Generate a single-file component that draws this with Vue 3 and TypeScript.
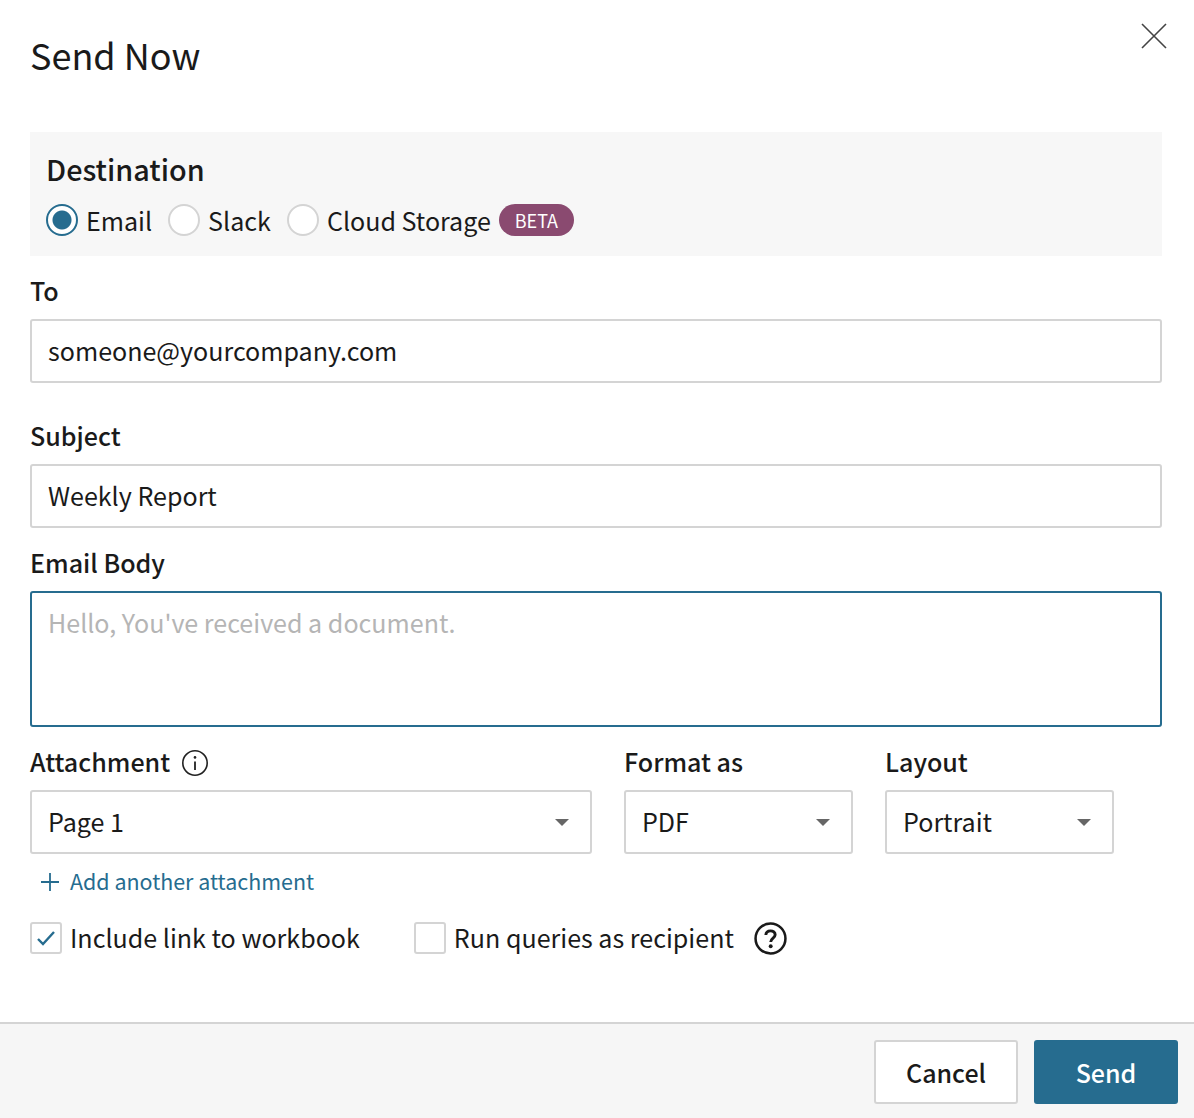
<template>
  <div class="dialog">
    <div class="dialog-body">
      <header class="dialog-header">
        <h1>Send Now</h1>
        <button class="close-btn" aria-label="Close">
          <svg width="28" height="28" viewBox="0 0 28 28"><path d="M2 2L26 26M26 2L2 26" stroke="#444" stroke-width="1.6" fill="none" /></svg>
        </button>
      </header>

      <section class="destination">
        <h2>Destination</h2>
        <div class="radios">
          <label v-for="d in destinations" :key="d" class="radio-item">
            <span class="radio" :class="{ on: d === 'Email' }"></span>
            <span>{{ d }}</span>
          </label>
          <span class="beta">BETA</span>
        </div>
      </section>

      <div class="field to-field">
        <label>To</label>
        <div class="input">someone@yourcompany.com</div>
      </div>
      <div class="field subject-field">
        <label>Subject</label>
        <div class="input">Weekly Report</div>
      </div>
      <div class="field body-field">
        <label>Email Body</label>
        <div class="textarea">Hello, You've received a document.</div>
      </div>

      <div class="select-row">
        <div class="field attach-col">
          <label class="with-icon">Attachment
            <svg width="28" height="28" viewBox="0 0 28 28" fill="none"><circle cx="14" cy="14" r="12.2" stroke="#222" stroke-width="1.6" /><path d="M14 12.5V21" stroke="#222" stroke-width="1.8" /><circle cx="14" cy="8.4" r="1.3" fill="#222" /></svg>
          </label>
          <div class="select"><span class="lift">Page 1</span><i class="caret"></i></div>
        </div>
        <div class="field format-col">
          <label>Format as</label>
          <div class="select"><span class="lift">PDF</span><i class="caret"></i></div>
        </div>
        <div class="field format-col">
          <label>Layout</label>
          <div class="select"><span class="lift">Portrait</span><i class="caret"></i></div>
        </div>
      </div>

      <a class="add-link">
        <svg width="18" height="18" viewBox="0 0 18 18"><path d="M9 0V18M0 9H18" stroke="#266c8f" stroke-width="1.8" fill="none" /></svg>
        <span class="lift-2">Add another attachment</span>
      </a>

      <div class="checks">
        <label class="check-item">
          <span class="checkbox">
            <svg width="20" height="16" viewBox="0 0 20 16" fill="none"><path d="M2 9L7 14L18 2" stroke="#266c8f" stroke-width="2.4" /></svg>
          </span>
          <span class="lift">Include link to workbook</span>
        </label>
        <label class="check-item second">
          <span class="checkbox"></span>
          <span class="lift">Run queries as recipient</span>
        </label>
        <svg class="help" width="33" height="33" viewBox="0 0 34 34" fill="none">
          <circle cx="17" cy="17" r="15.4" stroke="#1a1a1a" stroke-width="2.6" />
          <path d="M12.2 13.4C12.4 10.6 14.4 9.1 17 9.1C19.8 9.1 21.8 10.8 21.8 13.2C21.8 16.6 17.2 16.6 17.2 20.6" stroke="#1a1a1a" stroke-width="3" />
          <circle cx="17.2" cy="25" r="2" fill="#1a1a1a" />
        </svg>
      </div>
    </div>

    <footer class="dialog-footer">
      <button class="btn btn-cancel">Cancel</button>
      <button class="btn btn-send">Send</button>
    </footer>
  </div>
</template>

<script setup lang="ts">
const destinations: string[] = ['Email', 'Slack', 'Cloud Storage']
</script>

<style>
html, body {
  margin: 0;
  background: #fff;
}
</style>

<style scoped>
.dialog {
  width: 1194px;
  height: 1118px;
  display: flex;
  flex-direction: column;
  font-family: "Noto Sans CJK SC", "Noto Sans", sans-serif;
  font-size: 25.07px;
  color: #1a1a1a;
  box-sizing: border-box;
}

.dialog-body {
  flex: 1;
  padding: 0 32px 0 30px;
}

.dialog-header {
  height: 132px;
  position: relative;
}

.dialog-header h1 {
  margin: 0;
  padding-top: 29px;
  font-size: 36px;
  line-height: 50px;
  font-weight: 400;
}

.close-btn {
  position: absolute;
  top: 22px;
  right: -6px;
  padding: 0;
  border: none;
  background: none;
  line-height: 0;
}

.destination {
  height: 124px;
  box-sizing: border-box;
  padding: 18px 16px 0;
  background: #f7f7f7;
}

.destination h2 {
  margin: 0;
  font-size: 28.8px;
  line-height: 38px;
  font-weight: 500;
}

.radios {
  display: flex;
  align-items: center;
  margin-top: 14px;
  height: 36px;
}

.radio-item {
  display: flex;
  align-items: center;
  gap: 8px;
  margin-right: 16px;
}

.radio-item:nth-child(3) {
  margin-right: 8px;
}

.lift {
  padding-bottom: 2px;
}

.lift-2 {
  padding-bottom: 4px;
}

.radio {
  width: 32px;
  height: 32px;
  box-sizing: border-box;
  border: 2px solid #d4d4d4;
  border-radius: 50%;
  background: #fff;
}

.radio.on {
  border-color: #266c8f;
  background: radial-gradient(circle, #266c8f 0 9px, #fff 10px);
}

.beta {
  width: 75px;
  height: 32px;
  border-radius: 16px;
  background: #8a4a70;
  color: #fff;
  font-size: 18px;
  line-height: 32px;
  text-align: center;
}

.field label {
  display: block;
  font-weight: 500;
  line-height: 34px;
}

.to-field {
  margin-top: 17px;
}

.subject-field {
  margin-top: 35px;
}

.body-field {
  margin-top: 17px;
}

.field label + * {
  margin-top: 12px;
}

.input,
.select {
  height: 64px;
  box-sizing: border-box;
  border: 2px solid #d4d4d4;
  border-radius: 3px;
  padding: 0 16px;
  background: #fff;
}

.input {
  line-height: 58px;
}

.textarea {
  height: 136px;
  box-sizing: border-box;
  border: 2px solid #266c8f;
  border-radius: 3px;
  padding: 11px 16px;
  line-height: 36px;
  color: #b5b5b5;
}

.select-row {
  display: flex;
  gap: 32px;
  margin-top: 17px;
}

.attach-col {
  width: 562px;
}

.format-col {
  width: 229px;
}

.with-icon {
  display: flex !important;
  align-items: center;
  gap: 11px;
}

.with-icon svg {
  margin-top: 4px;
}

.select {
  display: flex;
  justify-content: space-between;
  align-items: center;
}

.caret {
  width: 0;
  height: 0;
  margin-right: 5px;
  border-left: 7px solid transparent;
  border-right: 7px solid transparent;
  border-top: 7px solid #666;
}

.add-link {
  display: flex;
  align-items: center;
  gap: 11px;
  margin: 10px 0 0 11px;
  height: 36px;
  font-size: 21.45px;
  color: #266c8f;
}

.checks {
  display: flex;
  align-items: center;
  margin-top: 20px;
  height: 36px;
}

.check-item {
  display: flex;
  align-items: center;
  gap: 8px;
}

.second {
  margin-left: 54px;
}

.checkbox {
  width: 32px;
  height: 32px;
  box-sizing: border-box;
  border: 2px solid #d4d4d4;
  border-radius: 3px;
  display: flex;
  align-items: center;
  justify-content: center;
}

.help {
  margin-left: 20px;
}

.dialog-footer {
  height: 96px;
  box-sizing: border-box;
  border-top: 2px solid #d4d4d4;
  background: #f6f6f6;
  display: flex;
  justify-content: flex-end;
  gap: 16px;
  padding: 16px 16px 0 0;
}

.btn {
  width: 144px;
  height: 64px;
  box-sizing: border-box;
  border-radius: 3px;
  font-family: inherit;
  font-size: 25px;
  font-weight: 500;
}

.btn-cancel {
  background: #fff;
  border: 2px solid #d4d4d4;
  color: #1a1a1a;
}

.btn-send {
  background: #266c8f;
  border: none;
  color: #fff;
}
</style>
